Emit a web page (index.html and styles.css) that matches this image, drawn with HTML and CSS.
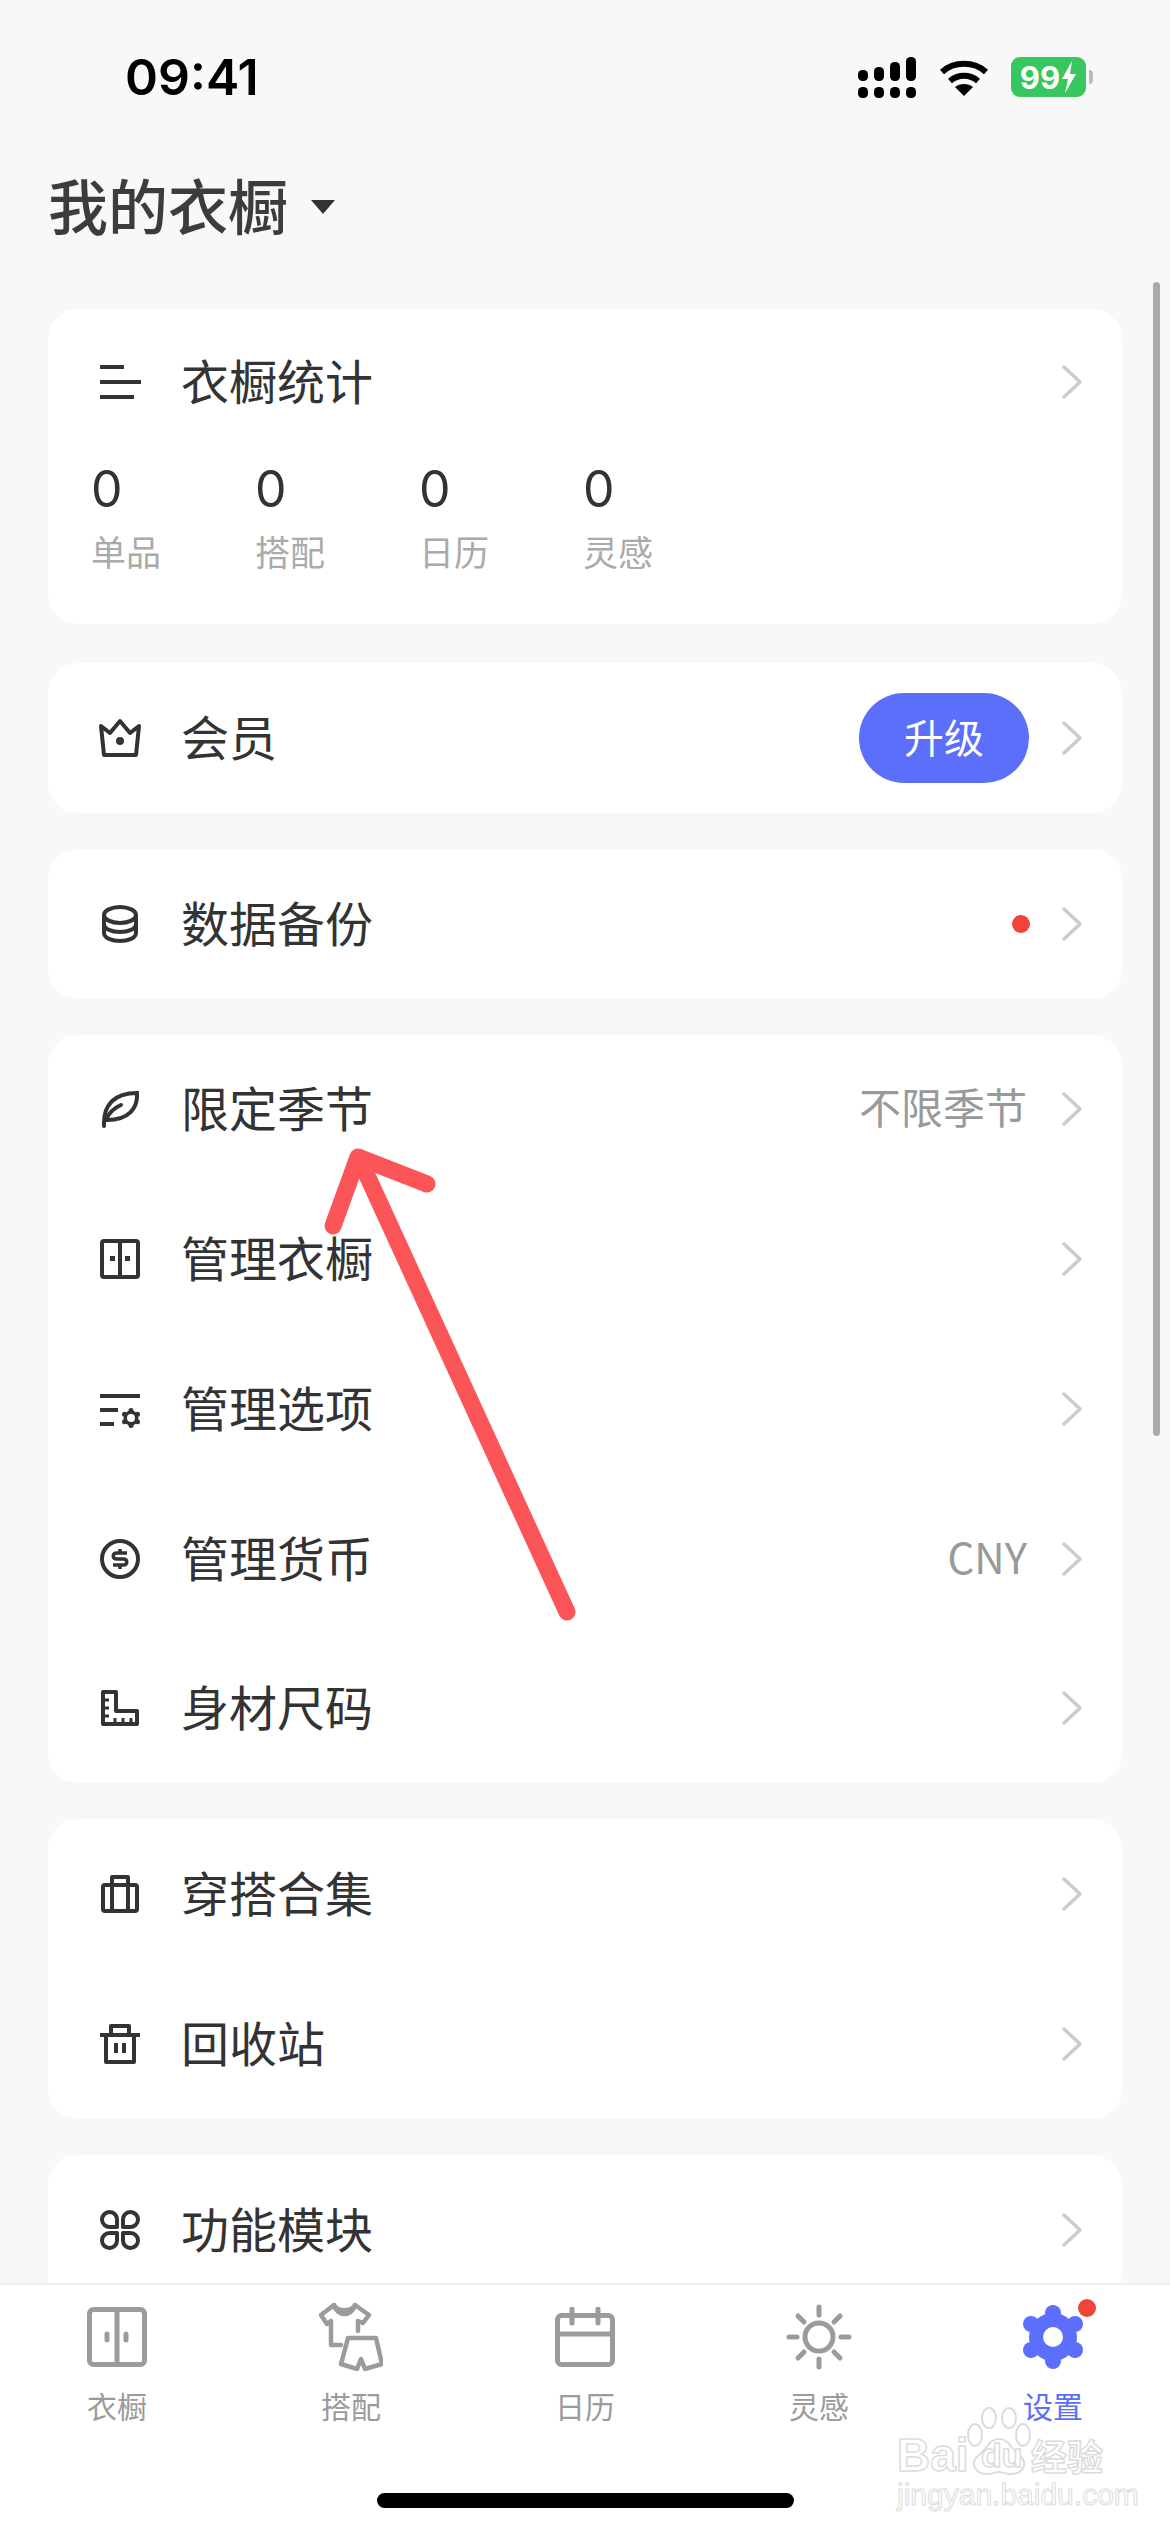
FILE: index.html
```html
<!DOCTYPE html>
<html lang="zh-CN">

<head>
    <meta charset="UTF-8" />
    <title>我的衣橱</title>
    <link rel="stylesheet" href="styles.css">
</head>

<body>
    <div class="page">
        <div class="status">
            <span class="time">09:41</span>
            <div class="status-icons">
                <svg class="sig" width="58" height="41" viewBox="0 0 58 41" fill="#000">
                    <rect x="0" y="13" width="10" height="11" rx="4.5" />
                    <rect x="16" y="10" width="10" height="14" rx="4.5" />
                    <rect x="32" y="5" width="10" height="19" rx="4.5" />
                    <rect x="48" y="0" width="10" height="24" rx="4.5" />
                    <rect x="0" y="30" width="10" height="11" rx="4.5" />
                    <rect x="16" y="30" width="10" height="11" rx="4.5" />
                    <rect x="32" y="30" width="10" height="11" rx="4.5" />
                    <rect x="48" y="30" width="10" height="11" rx="4.5" />
                </svg>
                <svg class="wifi" width="50" height="38" viewBox="0 0 50 38" fill="none" stroke="#000" stroke-width="6">
                    <path d="M3 14 C15 3 35 3 47 14" />
                    <path d="M11 23 C19 16 31 16 39 23" />
                    <path d="M25 38 L16 29 C21 25 29 25 34 29 Z" fill="#000" stroke="none" />
                </svg>
                <div class="batt">
                    <span class="batt-num">99</span>
                    <svg width="16" height="32" viewBox="0 0 16 32" fill="#fff">
                        <path d="M11 0 L1 18 H7 L4 32 L15 13 H9 Z" />
                    </svg>
                </div>
                <span class="batt-nub"></span>
            </div>
        </div>

        <div class="head">
            <h1>我的衣橱</h1>
            <span class="caret"></span>
        </div>

        <div class="list">
            <div class="card card-stats">
                <div class="row row-top">
                    <span class="ico">
                        <svg width="41" height="36" viewBox="0 0 41 36" stroke="#333" stroke-width="4">
                            <path d="M0 3 H24 M0 18 H41 M0 33 H34" />
                        </svg>
                    </span>
                    <span class="name">衣橱统计</span>
                    <svg class="chev" width="20" height="34" viewBox="0 0 20 34" fill="none" stroke="#ccc" stroke-width="3.5" stroke-linecap="round" stroke-linejoin="round"><path d="M2 2 L18 17 L2 32" /></svg>
                </div>
                <div class="stats">
                    <div class="stat"><b>0</b><span>单品</span></div>
                    <div class="stat"><b>0</b><span>搭配</span></div>
                    <div class="stat"><b>0</b><span>日历</span></div>
                    <div class="stat"><b>0</b><span>灵感</span></div>
                </div>
            </div>

            <div class="card">
                <div class="row">
                    <span class="ico">
                        <svg width="44" height="40" viewBox="0 0 44 40" fill="none" stroke="#333" stroke-width="4" stroke-linejoin="round">
                            <path d="M3 8 L12 15 L22 3 L32 15 L41 8 L38 37 H6 Z" />
                            <circle cx="22" cy="23" r="4" fill="#333" stroke="none" />
                        </svg>
                    </span>
                    <span class="name">会员</span>
                    <span class="upgrade">升级</span>
                    <svg class="chev" width="20" height="34" viewBox="0 0 20 34" fill="none" stroke="#ccc" stroke-width="3.5" stroke-linecap="round" stroke-linejoin="round"><path d="M2 2 L18 17 L2 32" /></svg>
                </div>
            </div>

            <div class="card">
                <div class="row">
                    <span class="ico">
                        <svg width="36" height="38" viewBox="0 0 36 38" fill="none" stroke="#333" stroke-width="4">
                            <ellipse cx="18" cy="10" rx="16" ry="8" />
                            <path d="M2 10 V28 C2 33 10 36 18 36 C26 36 34 33 34 28 V10" />
                            <path d="M2 19 C2 24 10 27 18 27 C26 27 34 24 34 19" />
                        </svg>
                    </span>
                    <span class="name">数据备份</span>
                    <span class="dot"></span>
                    <svg class="chev" width="20" height="34" viewBox="0 0 20 34" fill="none" stroke="#ccc" stroke-width="3.5" stroke-linecap="round" stroke-linejoin="round"><path d="M2 2 L18 17 L2 32" /></svg>
                </div>
            </div>

            <div class="card">
                <div class="row">
                    <span class="ico">
                        <svg width="38" height="38" viewBox="0 0 38 38" fill="none" stroke="#333" stroke-width="4" stroke-linecap="round">
                            <path d="M3 36 C2 14 14 3 36 3 C37 18 28 30 6 30" />
                            <path d="M5 30 C8 22 13 18 20 15" />
                        </svg>
                    </span>
                    <span class="name">限定季节</span>
                    <span class="val">不限季节</span>
                    <svg class="chev" width="20" height="34" viewBox="0 0 20 34" fill="none" stroke="#ccc" stroke-width="3.5" stroke-linecap="round" stroke-linejoin="round"><path d="M2 2 L18 17 L2 32" /></svg>
                </div>
                <div class="row">
                    <span class="ico">
                        <svg width="40" height="40" viewBox="0 0 40 40" fill="none" stroke="#333" stroke-width="4">
                            <rect x="2" y="2" width="36" height="36" rx="2" />
                            <path d="M20 2 V38" />
                            <rect x="10" y="17" width="5" height="5" fill="#333" stroke="none" />
                            <rect x="25" y="17" width="5" height="5" fill="#333" stroke="none" />
                        </svg>
                    </span>
                    <span class="name">管理衣橱</span>
                    <svg class="chev" width="20" height="34" viewBox="0 0 20 34" fill="none" stroke="#ccc" stroke-width="3.5" stroke-linecap="round" stroke-linejoin="round"><path d="M2 2 L18 17 L2 32" /></svg>
                </div>
                <div class="row">
                    <span class="ico">
                        <svg width="42" height="38" viewBox="0 0 42 38" fill="none" stroke="#333" stroke-width="4">
                            <path d="M1 6 H41 M1 20 H19 M1 34 H15" />
                            <g fill="#333" stroke="none">
                                <circle cx="32" cy="28" r="7.500" />
                                <circle cx="32" cy="20.500" r="2.500" />
                                <circle cx="32" cy="35.500" r="2.500" />
                                <circle cx="25.500" cy="24.200" r="2.500" />
                                <circle cx="38.500" cy="24.200" r="2.500" />
                                <circle cx="25.500" cy="31.800" r="2.500" />
                                <circle cx="38.500" cy="31.800" r="2.500" />
                                <circle cx="32" cy="28" r="4" fill="#fff" />
                            </g>
                        </svg>
                    </span>
                    <span class="name">管理选项</span>
                    <svg class="chev" width="20" height="34" viewBox="0 0 20 34" fill="none" stroke="#ccc" stroke-width="3.5" stroke-linecap="round" stroke-linejoin="round"><path d="M2 2 L18 17 L2 32" /></svg>
                </div>
                <div class="row">
                    <span class="ico">
                        <svg width="40" height="40" viewBox="0 0 40 40" fill="none" stroke="#333" stroke-width="4">
                            <circle cx="20" cy="20" r="18" />
                            <path d="M27 14 H17 C12 14 12 20 17 20 H23 C28 20 28 26 23 26 H13" stroke-width="3.500" />
                            <path d="M20 10 V14 M20 26 V30" stroke-width="3.500" />
                        </svg>
                    </span>
                    <span class="name">管理货币</span>
                    <span class="val">CNY</span>
                    <svg class="chev" width="20" height="34" viewBox="0 0 20 34" fill="none" stroke="#ccc" stroke-width="3.5" stroke-linecap="round" stroke-linejoin="round"><path d="M2 2 L18 17 L2 32" /></svg>
                </div>
                <div class="row">
                    <span class="ico">
                        <svg width="38" height="36" viewBox="0 0 38 36" fill="none" stroke="#333" stroke-width="4" stroke-linejoin="round">
                            <path d="M2 2 H15 V21 H36 V34 H2 Z" />
                            <path d="M2 10 H8 M2 18 H8 M2 26 H8 M14 34 V28 M22 34 V28 M30 34 V28" stroke-width="3" />
                        </svg>
                    </span>
                    <span class="name">身材尺码</span>
                    <svg class="chev" width="20" height="34" viewBox="0 0 20 34" fill="none" stroke="#ccc" stroke-width="3.5" stroke-linecap="round" stroke-linejoin="round"><path d="M2 2 L18 17 L2 32" /></svg>
                </div>
            </div>

            <div class="card">
                <div class="row">
                    <span class="ico">
                        <svg width="38" height="38" viewBox="0 0 38 38" fill="none" stroke="#333" stroke-width="4" stroke-linejoin="round">
                            <rect x="2" y="10" width="34" height="26" rx="2" />
                            <path d="M11 36 V10 M27 36 V10" />
                            <path d="M11 10 V2 H27 V10" />
                        </svg>
                    </span>
                    <span class="name">穿搭合集</span>
                    <svg class="chev" width="20" height="34" viewBox="0 0 20 34" fill="none" stroke="#ccc" stroke-width="3.5" stroke-linecap="round" stroke-linejoin="round"><path d="M2 2 L18 17 L2 32" /></svg>
                </div>
                <div class="row">
                    <span class="ico">
                        <svg width="40" height="40" viewBox="0 0 40 40" fill="none" stroke="#333" stroke-width="4" stroke-linejoin="round">
                            <path d="M0 11 H40" />
                            <path d="M11 11 V2 H29 V11" />
                            <path d="M6 11 V38 H34 V11" />
                            <path d="M16 19 V29 M24 19 V29" />
                        </svg>
                    </span>
                    <span class="name">回收站</span>
                    <svg class="chev" width="20" height="34" viewBox="0 0 20 34" fill="none" stroke="#ccc" stroke-width="3.5" stroke-linecap="round" stroke-linejoin="round"><path d="M2 2 L18 17 L2 32" /></svg>
                </div>
            </div>

            <div class="card">
                <div class="row">
                    <span class="ico">
                        <svg width="40" height="40" viewBox="0 0 40 40" fill="none" stroke="#333" stroke-width="4" stroke-linejoin="round">
                            <path d="M17 17 H10 A7.500 7.500 0 1 1 17 10 Z" />
                            <path d="M23 17 H30 A7.500 7.500 0 1 0 23 10 Z" />
                            <path d="M17 23 H10 A7.500 7.500 0 1 0 17 30 Z" />
                            <path d="M23 23 H30 A7.500 7.500 0 1 1 23 30 Z" />
                        </svg>
                    </span>
                    <span class="name">功能模块</span>
                    <svg class="chev" width="20" height="34" viewBox="0 0 20 34" fill="none" stroke="#ccc" stroke-width="3.5" stroke-linecap="round" stroke-linejoin="round"><path d="M2 2 L18 17 L2 32" /></svg>
                </div>
            </div>
        </div>

        <div class="tabs">
            <div class="tab">
                <span class="tab-ico">
                    <svg width="60" height="60" viewBox="0 0 60 60" fill="none" stroke="#9b9b9b" stroke-width="5">
                        <rect x="2.500" y="2.500" width="55" height="55" rx="4" />
                        <path d="M30 2 V58" />
                        <path d="M20 27 V33 M39 27 V33" stroke-width="5" stroke-linecap="round" />
                    </svg>
                </span>
                <span class="tab-label">衣橱</span>
            </div>
            <div class="tab">
                <span class="tab-ico">
                    <svg width="64" height="68" viewBox="0 0 64 68" fill="none" stroke="#9b9b9b" stroke-width="4.500" stroke-linecap="round" stroke-linejoin="round">
                        <path d="M39 28 V18 L44 20 L50 12 L36 2 C32 9 19 9 15 2 L2 12 L8 21 L12 18 V42 H22" />
                        <path d="M15 2 C18 14 33 14 36 2" />
                        <path d="M29 35 H57 L63 61 L46 66 L42 56 L38 66 L22 61 Z" />
                    </svg>
                </span>
                <span class="tab-label">搭配</span>
            </div>
            <div class="tab">
                <span class="tab-ico">
                    <svg width="60" height="60" viewBox="0 0 60 60" fill="none" stroke="#9b9b9b" stroke-width="5">
                        <rect x="2.500" y="8.500" width="55" height="49" rx="4" />
                        <path d="M2 27 H58" />
                        <path d="M17 2 V16 M43 2 V16" stroke-linecap="round" />
                    </svg>
                </span>
                <span class="tab-label">日历</span>
            </div>
            <div class="tab">
                <span class="tab-ico">
                    <svg width="66" height="66" viewBox="0 0 66 66" fill="none" stroke="#9b9b9b" stroke-width="5" stroke-linecap="round">
                        <circle cx="33" cy="33" r="14" />
                        <path d="M33 3 V11 M33 55 V63 M3 33 H11 M55 33 H63 M12 12 L18 18 M48 48 L54 54 M12 54 L18 48 M48 18 L54 12" />
                    </svg>
                </span>
                <span class="tab-label">灵感</span>
            </div>
            <div class="tab tab-on">
                <span class="tab-ico">
                    <svg width="62" height="66" viewBox="0 0 62 66" fill="#5b6ffb">
                        <circle cx="31" cy="33" r="24" />
                        <circle cx="31" cy="9" r="8" />
                        <circle cx="31" cy="57" r="8" />
                        <circle cx="9" cy="20" r="8" />
                        <circle cx="53" cy="20" r="8" />
                        <circle cx="9" cy="46" r="8" />
                        <circle cx="53" cy="46" r="8" />
                        <circle cx="31" cy="33" r="10" fill="#fff" />
                    </svg>
                    <span class="tab-dot"></span>
                </span>
                <span class="tab-label">设置</span>
            </div>
        </div>

        <div class="home-bar"></div>

        <div class="scroll-thumb"></div>

        <svg class="arrow" width="280" height="500" viewBox="320 1130 280 500" fill="none" stroke="#fb5558" stroke-width="17" stroke-linecap="round" stroke-linejoin="round">
            <path d="M567 1612 L360 1160" />
            <path d="M333 1226 L358 1157 L427 1184" />
        </svg>

        <div class="mark">
            <svg class="paw" width="64" height="68" viewBox="0 0 64 68" fill="#fff" stroke="#dcdcdc" stroke-width="2">
                <ellipse cx="8" cy="28" rx="7" ry="11" />
                <ellipse cx="22" cy="11" rx="7" ry="10" />
                <ellipse cx="42" cy="11" rx="7" ry="10" />
                <ellipse cx="56" cy="28" rx="7" ry="11" />
                <path d="M32 32 C22 32 20 42 12 48 C2 56 8 67 20 67 C26 67 28 65 32 65 C36 65 38 67 44 67 C56 67 62 56 52 48 C44 42 42 32 32 32 Z" />
            </svg>
            <div class="mark-top">
                <span class="mark-bai">Bai</span>
                <span class="mark-du">du</span>
                <span class="mark-cn">经验</span>
            </div>
            <div class="mark-url">jingyan.baidu.com</div>
        </div>
    </div>
</body>

</html>
```

FILE: styles.css
```css
* {
    box-sizing: border-box;
}

body {
    margin: 0;
    font-family: "Noto Sans CJK SC", "Noto Sans", sans-serif;
    color: #333;
}

.page {
    position: relative;
    width: 1170px;
    height: 2532px;
    background: #f8f8f8;
    display: flex;
    flex-direction: column;
    overflow: hidden;
}

/* status bar */
.status {
    height: 154px;
    flex-shrink: 0;
    display: flex;
    justify-content: space-between;
    align-items: center;
    padding: 0 77px 0 125px;
}

.time {
    font-family: Inter, sans-serif;
    font-size: 50px;
    font-weight: 600;
    color: #000;
}

.status-icons {
    display: flex;
    align-items: center;
}

.wifi {
    margin-left: 23px;
}

.batt {
    margin-left: 22px;
    width: 75px;
    height: 40px;
    border-radius: 9px;
    background: #37c75e;
    display: flex;
    align-items: center;
    justify-content: center;
    gap: 1px;
}

.batt-num {
    font-family: Inter, sans-serif;
    font-size: 31px;
    font-weight: 700;
    line-height: 1;
    color: #fff;
}

.batt-nub {
    width: 4px;
    height: 14px;
    margin-left: 3px;
    border-radius: 0 4px 4px 0;
    background: #bbb;
}

/* title */
.head {
    height: 106px;
    flex-shrink: 0;
    display: flex;
    align-items: center;
    padding-left: 48px;
}

.head h1 {
    margin: 0 0 6px;
    font-size: 60px;
    font-weight: 500;
    line-height: 1;
    color: #3c3c3c;
}

.caret {
    margin-left: 23px;
    width: 0;
    height: 0;
    border-left: 12px solid transparent;
    border-right: 12px solid transparent;
    border-top: 14px solid #333;
}

/* cards */
.list {
    flex: 1;
    min-height: 0;
    overflow: hidden;
    padding: 49px 48px 0;
    display: flex;
    flex-direction: column;
    gap: 36px;
}

.card {
    flex-shrink: 0;
    background: #fff;
    border-radius: 30px;
}

.card-stats {
    height: 315px;
    margin-bottom: 3px;
}

.row {
    height: 149.75px;
    display: flex;
    align-items: center;
    padding: 0 40px 0 50px;
}

.row-top {
    height: 146px;
}

.ico {
    width: 44px;
    height: 44px;
    flex-shrink: 0;
    display: flex;
    align-items: center;
    justify-content: center;
}

.name {
    margin: 0 0 6px 39px;
    font-size: 48px;
    line-height: 1;
    flex: 1;
}

.val {
    margin: 0 35px 6px 0;
    font-size: 42px;
    line-height: 1;
    color: #999;
}

.chev {
    flex-shrink: 0;
}

.upgrade {
    width: 170px;
    height: 90px;
    margin-right: 33px;
    padding-bottom: 4px;
    border-radius: 45px;
    background: #5b6ffb;
    color: #fff;
    font-size: 40px;
    display: flex;
    align-items: center;
    justify-content: center;
}

.dot {
    width: 18px;
    height: 18px;
    margin-right: 32px;
    border-radius: 50%;
    background: #f04438;
}

.stats {
    display: flex;
    padding: 6px 0 0 43px;
}

.stat {
    width: 164px;
    display: flex;
    flex-direction: column;
}

.stat b {
    font-family: Inter, sans-serif;
    font-size: 50px;
    font-weight: 400;
    line-height: 56px;
}

.stat span {
    margin-top: 12px;
    font-size: 35px;
    line-height: 44px;
    color: #aaa;
}

/* tab bar */
.tabs {
    height: 249px;
    flex-shrink: 0;
    background: #fff;
    border-top: 2px solid #eee;
    display: grid;
    grid-template-columns: repeat(5, 1fr);
    padding-top: 18px;
    align-items: start;
}

.tab {
    display: flex;
    flex-direction: column;
    align-items: center;
}

.tab-ico {
    position: relative;
    height: 68px;
    display: flex;
    align-items: center;
    justify-content: center;
}

.tab-label {
    margin-top: 14px;
    font-size: 30px;
    line-height: 40px;
    color: #9b9b9b;
}

.tab-on .tab-label {
    color: #5b6ffb;
}

.tab-dot {
    position: absolute;
    top: -4px;
    right: -12px;
    width: 18px;
    height: 18px;
    border-radius: 50%;
    background: #f04438;
}

/* overlays */
.home-bar {
    position: absolute;
    left: 377px;
    bottom: 24px;
    width: 417px;
    height: 15px;
    border-radius: 8px;
    background: #000;
}

.scroll-thumb {
    position: absolute;
    left: 1153px;
    top: 282px;
    width: 7px;
    height: 1154px;
    border-radius: 4px;
    background: #aaa;
}

.arrow {
    position: absolute;
    left: 320px;
    top: 1130px;
}

.mark {
    position: absolute;
    left: 897px;
    top: 2407px;
    width: 212px;
    height: 100px;
}

.paw {
    position: absolute;
    left: 70px;
    top: 0;
}

.mark-top {
    position: absolute;
    left: 0;
    top: 24px;
    width: 100%;
    height: 48px;
    display: flex;
    align-items: center;
    font-family: "Liberation Sans", sans-serif;
    color: #fff;
    -webkit-text-stroke: 1.500px #dcdcdc;
}

.mark-bai {
    font-size: 46px;
    font-weight: 700;
    line-height: 48px;
    width: 84px;
}

.mark-du {
    font-size: 34px;
    font-weight: 700;
    line-height: 48px;
    width: 50px;
}

.mark-cn {
    font-family: "Noto Sans CJK SC", sans-serif;
    font-size: 36px;
    font-weight: 700;
    line-height: 48px;
}

.mark-url {
    position: absolute;
    left: 0;
    top: 72px;
    font-family: "Liberation Sans", sans-serif;
    font-size: 30px;
    line-height: 32px;
    color: #fff;
    -webkit-text-stroke: 1px #dcdcdc;
}
```
